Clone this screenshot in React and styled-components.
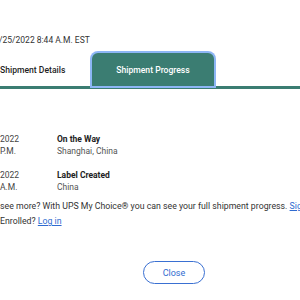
import React from 'react'
import styled, { createGlobalStyle } from 'styled-components'

const events = [
    { date: '2022', time: 'P.M.', status: 'On the Way', place: 'Shanghai, China' },
    { date: '2022', time: 'A.M.', status: 'Label Created', place: 'China' },
]

const App = () => {

    return <Page>
        <GlobalStyle />
        <DateLine>/25/2022 8:44 A.M. EST</DateLine>

        <TabBar>
            <Tab>Shipment Details</Tab>
            <Tab active>Shipment Progress</Tab>
        </TabBar>

        <Events>
            {events.map((event, index) => (
                <EventRow key={index}>
                    <When>
                        <div>{event.date}</div>
                        <div>{event.time}</div>
                    </When>
                    <What>
                        <Status>{event.status}</Status>
                        <Place>{event.place}</Place>
                    </What>
                </EventRow>
            ))}
        </Events>

        <Note>
            <Line>see more? With UPS My Choice® you can see your full shipment progress. <Link href="#">Sign Up</Link></Line>
            <Line>Enrolled? <Link href="#">Log in</Link></Line>
        </Note>

        <Footer>
            <CloseButton>Close</CloseButton>
        </Footer>
    </Page>
}

export default App

const GlobalStyle = createGlobalStyle`

    body {
        margin: 0;
        background: #fff;
        font-family: Roboto, "Liberation Sans", sans-serif;
        overflow: hidden;
    }
`

const Page = styled.div`

    width: 300px;
    height: 300px;
    overflow: hidden;
    color: #2a2a2a;
    font-size: 8.5px;
`

const DateLine = styled.div`

    margin: 34px 0 0 -1px;
    height: 12px;
    line-height: 12px;
    font-size: 8.5px;
    color: #333;
    white-space: nowrap;
`

const TabBar = styled.div`

    display: flex;
    align-items: flex-end;
    margin-top: 7px;
    height: 33px;
    border-bottom: 3px solid #3b7d72;
`

const Tab = styled.div`

    display: flex;
    align-items: center;
    height: 33px;
    font-weight: 500;
    font-size: 8.6px;
    white-space: nowrap;
    width: ${p => p.active ? '122px' : '90px'};
    justify-content: ${p => p.active ? 'center' : 'flex-start'};
    margin-left: ${p => p.active ? '2px' : '0'};
    color: ${p => p.active ? '#fff' : '#1f1f1f'};
    background: ${p => p.active ? '#3b7d72' : 'transparent'};
    border-radius: ${p => p.active ? '6px 6px 0 0' : '0'};
    box-shadow: ${p => p.active ? '0 0 0 2px #8db6f5' : 'none'};
`

const Events = styled.div`

    display: flex;
    flex-direction: column;
    gap: 12px;
    margin-top: 44px;
`

const EventRow = styled.div`

    display: grid;
    grid-template-columns: 57px 1fr;
    line-height: 12px;
    font-size: 8.5px;
`

const When = styled.div`

    color: #444;
`

const What = styled.div``

const Status = styled.div`

    font-weight: 700;
    color: #222;
`

const Place = styled.div`

    color: #555;
`

const Note = styled.div`

    margin-top: 6px;
    line-height: 15px;
    font-size: 8.75px;
    color: #333;
`

const Line = styled.div`

    white-space: nowrap;
`

const Link = styled.a`

    color: #2f6bd0;
    text-decoration: underline;
`

const Footer = styled.div`

    display: flex;
    padding-left: 143px;
    margin-top: 32px;
`

const CloseButton = styled.button`

    width: 62px;
    height: 23px;
    padding: 0;
    border: 1.5px solid #3a70d2;
    border-radius: 12px;
    background: #fff;
    color: #2f6bd0;
    font-family: Roboto, "Liberation Sans", sans-serif;
    font-size: 9px;
    cursor: pointer;
`
